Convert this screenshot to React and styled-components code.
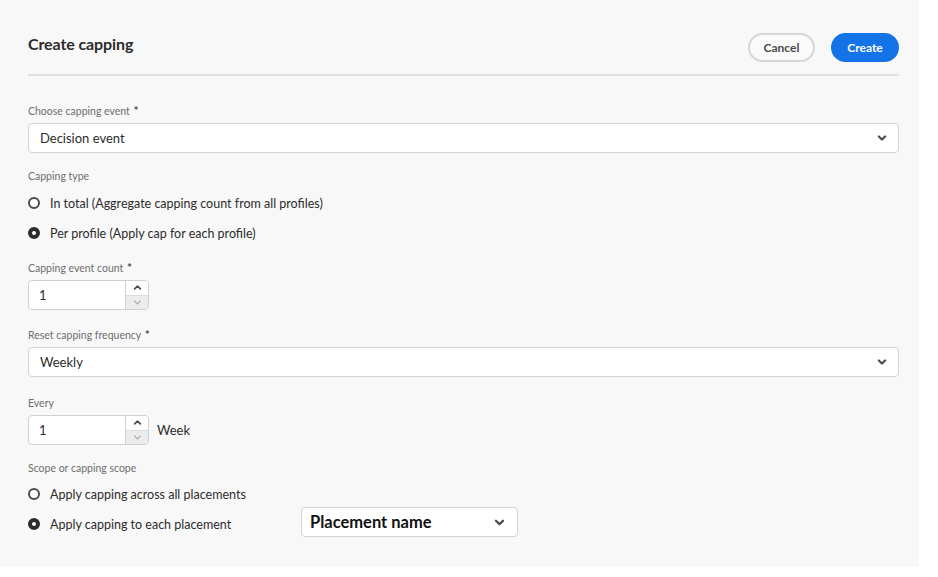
import React from "react"
import styled, { createGlobalStyle } from "styled-components"

const GlobalStyle = createGlobalStyle`
  html, body {
    margin: 0;
    padding: 0;
    background: #ffffff;
  }
  body {
    font-family: Lato, "Open Sans", "Liberation Sans", sans-serif;
  }
`

function Chevron({ size = 10, color = "#4b4b4b", up = false, weight = 2.1 }) {
  return (
    <svg width={size} height={size} viewBox="0 0 10 10" fill="none">
      <path
        d={up ? "M1.8 6.6 L5 3.4 L8.2 6.6" : "M1.8 3.4 L5 6.6 L8.2 3.4"}
        stroke={color}
        strokeWidth={weight}
        strokeLinecap="round"
        strokeLinejoin="round"
      />
    </svg>
  )
}

function Picker({ value }) {
  return (
    <Select>
      <SelectValue>{value}</SelectValue>
      <Chevron />
    </Select>
  )
}

function NumberField({ value, unit }) {
  return (
    <NumberRow>
      <NumberBox>
        <NumberValue>{value}</NumberValue>
        <Stepper>
          <StepButton>
            <Chevron size={9} color="#4b4b4b" up weight={1.8} />
          </StepButton>
          <StepButton disabled>
            <Chevron size={9} color="#b3b3b3" weight={1.4} />
          </StepButton>
        </Stepper>
      </NumberBox>
      {unit && <Unit>{unit}</Unit>}
    </NumberRow>
  )
}

function Radio({ checked, children }) {
  return (
    <RadioRow>
      <RadioDot checked={checked} />
      <RadioText>{children}</RadioText>
    </RadioRow>
  )
}

export default function App() {
  return (
    <>
      <GlobalStyle />
      <Panel>
        <Header>
          <Title>Create capping</Title>
          <Actions>
            <Button>Cancel</Button>
            <Button primary>Create</Button>
          </Actions>
        </Header>
        <Divider />

        <Field top={27}>
          <Label>Choose capping event <Star>*</Star></Label>
          <Picker value="Decision event" />
        </Field>

        <Field top={15}>
          <Label>Capping type</Label>
          <RadioGroup>
            <Radio>In total (Aggregate capping count from all profiles)</Radio>
            <Radio checked>Per profile (Apply cap for each profile)</Radio>
          </RadioGroup>
        </Field>

        <Field top={12}>
          <Label>Capping event count <Star>*</Star></Label>
          <NumberField value="1" />
        </Field>

        <Field top={17}>
          <Label>Reset capping frequency <Star>*</Star></Label>
          <Picker value="Weekly" />
        </Field>

        <Field top={18}>
          <Label>Every</Label>
          <NumberField value="1" unit="Week" />
        </Field>

        <Field top={15}>
          <Label>Scope or capping scope</Label>
          <ScopeGroup>
            <Radio>Apply capping across all placements</Radio>
            <RadioRow>
              <RadioDot checked />
              <RadioText wide>Apply capping to each placement</RadioText>
              <Placement>
                <PlacementText>Placement name</PlacementText>
                <Chevron size={11} color="#4b4b4b" />
              </Placement>
            </RadioRow>
          </ScopeGroup>
        </Field>
      </Panel>
    </>
  )
}

const Panel = styled.div`
  width: 919px;
  height: 567px;
  box-sizing: border-box;
  background: #f8f8f8;
  padding: 33px 20px 0 28px;
  display: flex;
  flex-direction: column;
`

const Header = styled.div`
  height: 29px;
  display: flex;
  justify-content: space-between;
  align-items: flex-start;
`

const Title = styled.div`
  font-size: 16px;
  line-height: 20px;
  margin-top: 1px;
  font-weight: 700;
  color: #2c2c2c;
  letter-spacing: -0.1px;
`

const Actions = styled.div`
  display: flex;
  gap: 16px;
`

const Button = styled.button`
  height: 29px;
  width: ${(p) => (p.primary ? "68px" : "67px")};
  box-sizing: border-box;
  border-radius: 15px;
  font-family: inherit;
  font-size: 12px;
  font-weight: 700;
  border: 2px solid ${(p) => (p.primary ? "#1473e6" : "#d6d6d6")};
  background: ${(p) => (p.primary ? "#1473e6" : "#fafafa")};
  color: ${(p) => (p.primary ? "#ffffff" : "#4b4b4b")};
  padding: 0;
`

const Divider = styled.div`
  height: 2px;
  background: #e1e1e1;
  margin-top: 12px;
`

const Field = styled.div`
  margin-top: ${(p) => p.top}px;
  display: flex;
  flex-direction: column;
`

const Label = styled.div`
  height: 16px;
  line-height: 16px;
  font-size: 10.5px;
  color: #6e6e6e;
  margin-bottom: 4px;
`

const Star = styled.span`
  color: #4b4b4b;
  font-size: 12px;
  font-weight: 700;
  margin-left: 1px;
`

const Select = styled.div`
  height: 30px;
  box-sizing: border-box;
  background: #ffffff;
  border: 1px solid #d3d3d3;
  border-radius: 4px;
  display: flex;
  align-items: center;
  justify-content: space-between;
  padding: 0 11px 0 11px;
`

const SelectValue = styled.div`
  font-size: 13px;
  color: #2c2c2c;
`

const NumberRow = styled.div`
  display: flex;
  align-items: center;
  gap: 8px;
`

const NumberBox = styled.div`
  width: 121px;
  height: 30px;
  box-sizing: border-box;
  border: 1px solid #d0d0d0;
  border-radius: 4px;
  background: #ffffff;
  display: flex;
  overflow: hidden;
`

const NumberValue = styled.div`
  flex: 1;
  display: flex;
  align-items: center;
  padding-left: 10px;
  font-size: 13px;
  color: #2c2c2c;
`

const Stepper = styled.div`
  width: 22px;
  border-left: 1px solid #d0d0d0;
  display: flex;
  flex-direction: column;
`

const StepButton = styled.div`
  flex: 1;
  display: flex;
  align-items: center;
  justify-content: center;
  background: ${(p) => (p.disabled ? "#ececec" : "#ffffff")};
  border-top: ${(p) => (p.disabled ? "1px solid #dcdcdc" : "none")};
`

const Unit = styled.div`
  font-size: 13px;
  color: #2c2c2c;
`

const RadioGroup = styled.div`
  display: flex;
  flex-direction: column;
`

const ScopeGroup = styled(RadioGroup)`
  margin-top: -1px;
`

const RadioRow = styled.div`
  height: 30px;
  display: flex;
  align-items: center;
`

const RadioDot = styled.span`
  width: 12px;
  height: 12px;
  box-sizing: border-box;
  border-radius: 50%;
  background: #ffffff;
  border: ${(p) => (p.checked ? "4px solid #2c2c2c" : "2px solid #4b4b4b")};
  margin-right: 10px;
  flex-shrink: 0;
`

const RadioText = styled.span`
  font-size: 12.5px;
  color: #2c2c2c;
  width: ${(p) => (p.wide ? "251px" : "auto")};
`

const Placement = styled.div`
  width: 217px;
  height: 30px;
  box-sizing: border-box;
  border: 1px solid #d3d3d3;
  border-radius: 4px;
  background: #ffffff;
  display: flex;
  align-items: center;
  justify-content: space-between;
  padding: 0 12px 0 8px;
  margin-top: -4px;
`

const PlacementText = styled.div`
  font-size: 16.5px;
  font-weight: 700;
  color: #111111;
`
